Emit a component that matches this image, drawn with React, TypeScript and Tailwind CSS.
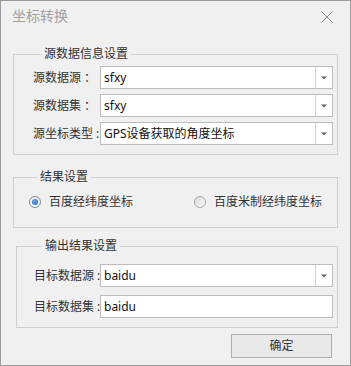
import React from "react";

const boxCls =
  "h-[23px] w-[233px] border border-[#bcbcbc] bg-white flex items-center text-[12px] text-[#111]";

function Combo({ value }: { value: string }) {
  return (
    <div className={boxCls}>
      <div className="flex-1 pl-[3px] leading-[16px] whitespace-nowrap overflow-hidden">{value}</div>
      <div className="w-[17px] h-full border-l border-[#d4d4d4] flex items-center justify-center">
        <svg width="6" height="4" viewBox="0 0 6 4">
          <path d="M0 0.5 H6 L3 3.5 Z" fill="#606060" />
        </svg>
      </div>
    </div>
  );
}

function TextBox({ value }: { value: string }) {
  return (
    <div className={boxCls}>
      <div className="flex-1 pl-[3px] leading-[16px]">{value}</div>
    </div>
  );
}

function Row({ label, children, w }: { label: string; children: React.ReactNode; w: string }) {
  return (
    <div className="flex items-center">
      <div className={`${w} text-[12px] leading-[16px] text-[#333] whitespace-nowrap`}>{label}</div>
      {children}
    </div>
  );
}

function Radio({ checked, label }: { checked: boolean; label: string }) {
  return (
    <div className="flex items-center gap-[8px]">
      <div
        className={
          checked
            ? "w-[12px] h-[12px] rounded-full border border-[#7d8a99] bg-gradient-to-b from-[#e8eef5] to-[#ffffff] flex items-center justify-center"
            : "w-[12px] h-[12px] rounded-full border border-[#a8a8a8] bg-gradient-to-br from-[#dcdcdc] to-[#f8f8f8]"
        }
      >
        {checked && (
          <div className="w-[6px] h-[6px] rounded-full bg-[radial-gradient(circle_at_40%_35%,#6fa6e0,#1f5fa8)]" />
        )}
      </div>
      <span className="text-[12px] leading-[16px] text-[#333]">{label}</span>
    </div>
  );
}

export default function App() {
  return (
    <div className="w-[351px] h-[366px] border border-[#9c9c9c] bg-[#f0f0f0] flex flex-col font-['Noto_Sans','Noto_Sans_CJK_SC',sans-serif]">
      <div className="h-[45px] flex justify-between items-start pl-[11px] pr-[17px] pt-[6px]">
        <span className="text-[14px] leading-[18px] text-[#a0a0a0]">坐标转换</span>
        <svg width="12" height="12" viewBox="0 0 12 12" className="mt-[4px]">
          <path d="M0.5 0.5 L11.5 11.5 M11.5 0.5 L0.5 11.5" stroke="#8a8a8a" strokeWidth="1" />
        </svg>
      </div>

      <fieldset className="ml-[12px] w-[325px] border border-[#d0d0d0] pl-[19px] pr-[4px] pt-[4px] pb-[9px] flex flex-col gap-[5px]">
        <legend className="ml-[8px] px-[3px] text-[12px] leading-[16px] text-[#333]">源数据信息设置</legend>
        <Row label="源数据源 ：" w="w-[67px]">
          <Combo value="sfxy" />
        </Row>
        <Row label="源数据集 ：" w="w-[67px]">
          <Combo value="sfxy" />
        </Row>
        <Row label="源坐标类型 :" w="w-[67px]">
          <Combo value="GPS设备获取的角度坐标" />
        </Row>
      </fieldset>

      <fieldset className="ml-[12px] mt-[14px] w-[325px] border border-[#d0d0d0] pl-[15px] pt-[10px] pb-[18px]">
        <legend className="ml-[8px] px-[3px] text-[12px] leading-[16px] text-[#333]">结果设置</legend>
        <div className="flex items-center h-[14px]">
          <div className="w-[165px]">
            <Radio checked label="百度经纬度坐标" />
          </div>
          <Radio checked={false} label="百度米制经纬度坐标" />
        </div>
      </fieldset>

      <fieldset className="ml-[15px] mt-[10px] w-[322px] border border-[#d0d0d0] pl-[17px] pr-[4px] pt-[10px] pb-[9px] flex flex-col gap-[8px]">
        <legend className="ml-[8px] px-[3px] text-[12px] leading-[16px] text-[#333]">输出结果设置</legend>
        <Row label="目标数据源 :" w="w-[66px]">
          <Combo value="baidu" />
        </Row>
        <Row label="目标数据集 :" w="w-[66px]">
          <TextBox value="baidu" />
        </Row>
      </fieldset>

      <div className="flex justify-end mt-[6px] mr-[18px]">
        <div className="w-[101px] h-[24px] border border-[#adadad] bg-[#e9e9e9] flex items-center justify-center text-[12px] leading-[16px] text-[#333]">
          确定
        </div>
      </div>
    </div>
  );
}
